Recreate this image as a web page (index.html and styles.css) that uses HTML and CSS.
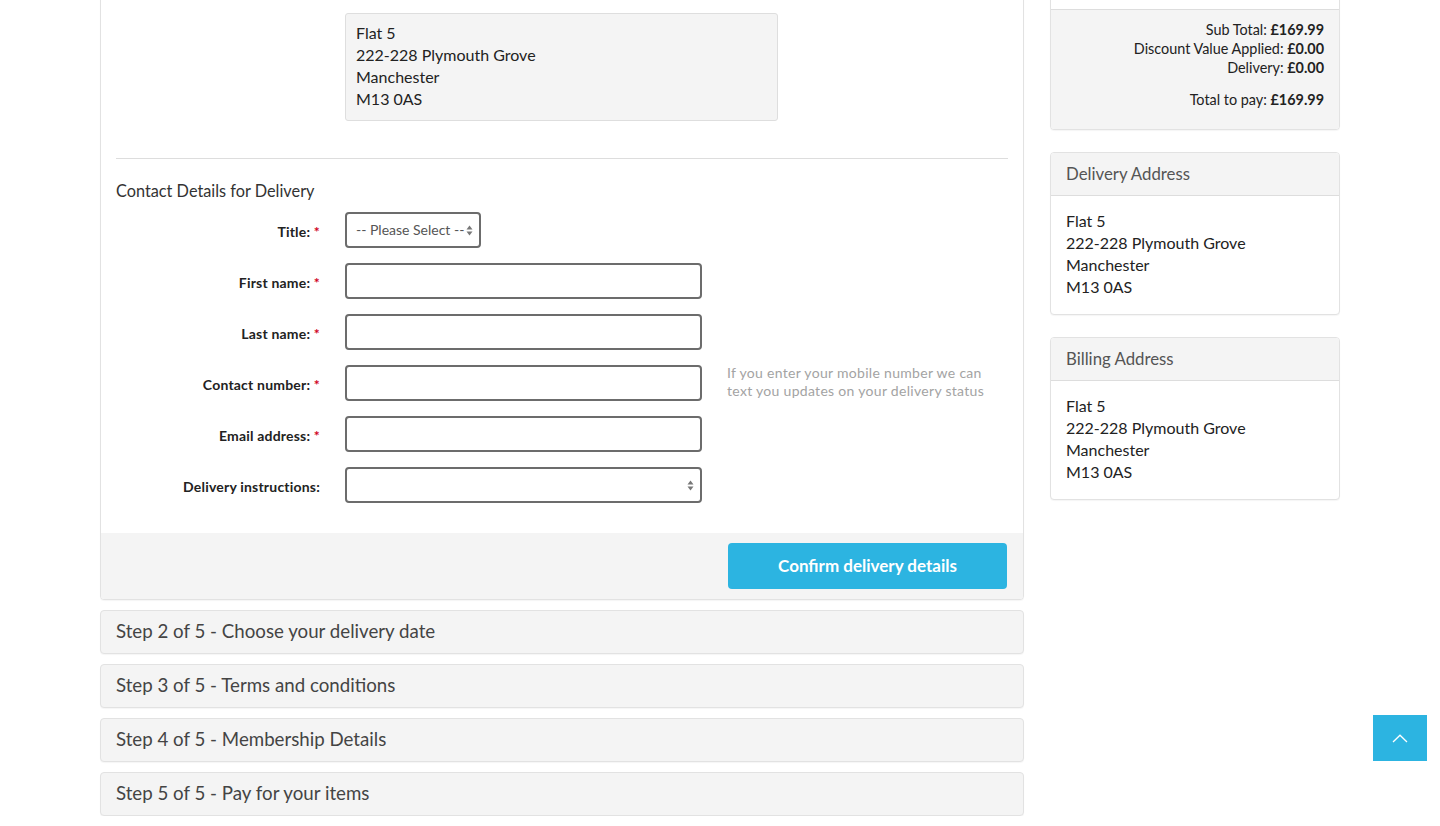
FILE: index.html
```html
<!DOCTYPE html>
<html lang="en">
<head>
<meta charset="utf-8">
<title>Checkout - Delivery details</title>
<link rel="stylesheet" href="styles.css">
</head>
<body>
<div class="page">
  <main class="main-col">
    <section class="panel step-active">
      <div class="panel-body">
        <div class="form-row">
          <div class="label-cell"></div>
          <address class="address-box">Flat 5<br>222-228 Plymouth Grove<br>Manchester<br>M13 0AS</address>
        </div>
        <hr class="divider">
        <h3 class="section-title">Contact Details for Delivery</h3>
        <form class="form">
          <div class="form-row field">
            <label class="label-cell">Title: <span class="req">*</span></label>
            <div class="control select title-select"><span class="placeholder">-- Please Select --</span><span class="arrows"><svg width="7" height="11" viewBox="0 0 7 11"><path d="M3.5 0.5L6.5 4.5H0.5Z" fill="#777"/><path d="M3.5 10.5L6.5 6.5H0.5Z" fill="#777"/></svg></span></div>
          </div>
          <div class="form-row field">
            <label class="label-cell">First name: <span class="req">*</span></label>
            <div class="control"></div>
          </div>
          <div class="form-row field">
            <label class="label-cell">Last name: <span class="req">*</span></label>
            <div class="control"></div>
          </div>
          <div class="form-row field">
            <label class="label-cell">Contact number: <span class="req">*</span></label>
            <div class="control"></div>
            <p class="hint">If you enter your mobile number we can text you updates on your delivery status</p>
          </div>
          <div class="form-row field">
            <label class="label-cell">Email address: <span class="req">*</span></label>
            <div class="control"></div>
          </div>
          <div class="form-row field">
            <label class="label-cell">Delivery instructions:</label>
            <div class="control select"><span class="placeholder"></span><span class="arrows"><svg width="7" height="11" viewBox="0 0 7 11"><path d="M3.5 0.5L6.5 4.5H0.5Z" fill="#777"/><path d="M3.5 10.5L6.5 6.5H0.5Z" fill="#777"/></svg></span></div>
          </div>
        </form>
      </div>
      <div class="panel-footer">
        <button class="btn-confirm" type="button">Confirm delivery details</button>
      </div>
    </section>
    <section class="panel step"><h2 class="step-title">Step 2 of 5 - Choose your delivery date</h2></section>
    <section class="panel step"><h2 class="step-title">Step 3 of 5 - Terms and conditions</h2></section>
    <section class="panel step"><h2 class="step-title">Step 4 of 5 - Membership Details</h2></section>
    <section class="panel step"><h2 class="step-title">Step 5 of 5 - Pay for your items</h2></section>
  </main>
  <aside class="side-col">
    <section class="panel summary">
      <div class="summary-items"></div>
      <div class="summary-totals">
        <div>Sub Total: <b>£169.99</b></div>
        <div>Discount Value Applied: <b>£0.00</b></div>
        <div>Delivery: <b>£0.00</b></div>
        <div class="total">Total to pay: <b>£169.99</b></div>
      </div>
    </section>
    <section class="panel side-panel">
      <div class="panel-heading">Delivery Address</div>
      <div class="side-body">Flat 5<br>222-228 Plymouth Grove<br>Manchester<br>M13 0AS</div>
    </section>
    <section class="panel side-panel">
      <div class="panel-heading">Billing Address</div>
      <div class="side-body">Flat 5<br>222-228 Plymouth Grove<br>Manchester<br>M13 0AS</div>
    </section>
  </aside>
</div>
<a class="scroll-top" href="#" aria-label="Back to top"><svg width="16" height="9" viewBox="0 0 16 9"><path d="M1 8L8 1.2L15 8" fill="none" stroke="#fff" stroke-width="1.3"/></svg></a>
</body>
</html>
```
FILE: styles.css
```css
* { box-sizing: border-box; }
html, body { margin: 0; padding: 0; background: #fff; }
body {
  font-family: Lato, "Noto Sans", "Liberation Sans", sans-serif;
  color: #333;
  font-size: 16px;
  line-height: 22px;
  overflow: hidden;
}
.page {
  display: flex;
  gap: 26px;
  padding-left: 100px;
  margin-top: -40px;
}
.main-col { width: 924px; display: flex; flex-direction: column; gap: 10px; }
.side-col { width: 290px; display: flex; flex-direction: column; gap: 22px; }

.panel {
  background: #fff;
  border: 1px solid #e2e2e2;
  border-radius: 4px;
  box-shadow: 0 1px 1px rgba(0,0,0,0.04);
  overflow: hidden;
}
.panel-body { padding: 52px 15px 0; }

.form-row {
  display: grid;
  grid-template-columns: 204px 357px 1fr;
  column-gap: 25px;
  align-items: center;
}
.address-box {
  font-style: normal;
  width: 433px;
  background: #f4f4f4;
  border: 1px solid #dedede;
  border-radius: 3px;
  padding: 8px 10px 10px;
  font-size: 16px;
  line-height: 22px;
  color: #222;
}
.divider {
  border: 0;
  border-top: 1px solid #ddd;
  margin: 37px 0 0;
  height: 0;
}
.section-title {
  font-size: 16.3px;
  font-weight: normal;
  line-height: 22px;
  margin: 21px 0 10px;
  color: #333;
}
.form { display: flex; flex-direction: column; gap: 15px; }
.label-cell {
  text-align: right;
  font-weight: bold;
  font-size: 14px;
  letter-spacing: 0.2px;
  color: #222;
  padding-top: 4px;
}
.req { color: #d0021b; }
.control {
  height: 36px;
  border: 2px solid #6c6c6c;
  border-radius: 4px;
  background: #fff;
}
.select {
  display: flex;
  align-items: center;
  justify-content: space-between;
  padding: 0 6px 0 9px;
}
.title-select { width: 136px; }
.placeholder { font-size: 14px; color: #555; }
.arrows { display: flex; }
.hint {
  margin: -1px 0 0;
  align-self: start;
  font-size: 14px;
  letter-spacing: 0.3px;
  line-height: 18px;
  color: #a3a3a3;
  width: 270px;
}
.panel-footer {
  margin-top: 30px;
  background: #f4f4f4;
  padding: 10px 16px 10px;
  display: flex;
  justify-content: flex-end;
}
.btn-confirm {
  width: 279px;
  height: 46px;
  border: 0;
  border-radius: 4px;
  background: #2cb4e1;
  color: #fff;
  font-family: inherit;
  font-weight: bold;
  font-size: 17px;
  padding-bottom: 3px;
}
.step { background: #f4f4f4; }
.step-title {
  margin: 0;
  font-size: 18.7px;
  font-weight: normal;
  line-height: 40px;
  padding: 0 15px 2px;
  color: #444;
}

.summary-items { height: 49px; border-bottom: 1px solid #ddd; background: #fff; }
.summary-totals {
  background: #f4f4f4;
  text-align: right;
  padding: 10px 15px 20px;
  font-size: 14.4px;
  line-height: 19px;
  color: #222;
}
.summary-totals .total { margin-top: 13px; }
.side-panel .panel-heading {
  height: 43px;
  background: #f4f4f4;
  border-bottom: 1px solid #ddd;
  padding: 0 15px;
  font-size: 16.8px;
  line-height: 42px;
  color: #555;
}
.side-body {
  padding: 14px 15px 16px;
  font-size: 16px;
  line-height: 22px;
  color: #222;
}
.scroll-top {
  position: fixed;
  right: 13px;
  bottom: 65px;
  width: 54px;
  height: 46px;
  background: #2cb4e1;
  display: flex;
  align-items: center;
  justify-content: center;
}
```
